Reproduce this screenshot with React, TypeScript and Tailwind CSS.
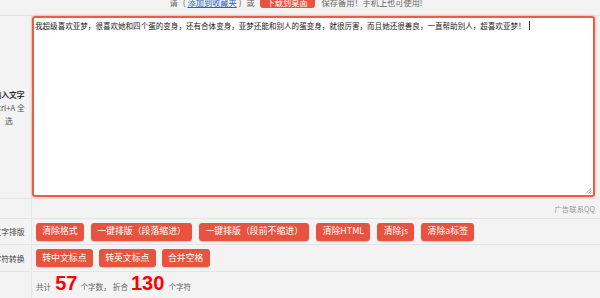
import React from "react";

const font = { fontFamily: '"Noto Sans CJK SC", "Liberation Sans", sans-serif' };

function Btn({ children }: { children: React.ReactNode }) {
  return (
    <span className="inline-flex h-[18px] items-center rounded-[3px] bg-[#e8533f] px-[6.25px] text-[8.9px] leading-none text-white shadow-[0_1px_1px_rgba(0,0,0,0.15)]">
      {children}
    </span>
  );
}

function Label({ children }: { children: React.ReactNode }) {
  return (
    <div className="w-[32px] shrink-0 self-stretch overflow-hidden border-r border-[#e4e4e4] flex items-center">
      <div className="ml-[-14px] w-[46px] shrink-0 text-center text-[7.8px] leading-[13px] text-[#444]">
        {children}
      </div>
    </div>
  );
}

export default function App() {
  const text =
    "我超级喜欢亚梦，很喜欢她和四个蛋的变身，还有合体变身，亚梦还能和别人的蛋变身，就很厉害，而且她还很善良，一直帮助别人，超喜欢亚梦！";
  return (
    <div className="h-[298px] w-[600px] overflow-hidden bg-[#f3f3f3]" style={font}>
      {/* top row */}
      <div className="h-[16px] overflow-hidden border-b border-[#e4e4e4]">
        <div className="mt-[-6px] flex h-[16px] items-center justify-center pr-[8px] text-[8.2px] leading-none text-[#666]">
          <span>请</span>
          <span className="ml-[5px]">(</span>
          <span className="mx-[2px] text-[#2a62c9] underline">添加到收藏夹</span>
          <span>)</span>
          <span className="ml-[5px]">或</span>
          <span className="ml-[5px] inline-flex h-[12px] items-center rounded-[3px] bg-[#e8533f] px-[7px] text-white">
            下载到桌面
          </span>
          <span className="ml-[7px]">保存备用！手机上也可使用!</span>
        </div>
      </div>

      {/* textarea row */}
      <div className="flex h-[183px] border-b border-[#e4e4e4]">
        <Label>
          <span className="font-bold text-[#333]">输入文字</span>
          <br />
          <span className="text-[#555]">Ctrl+A 全</span>
          <br />
          <span className="text-[#555]">选</span>
        </Label>
        <div className="flex-1">
          <div className="relative h-[181px] w-[563px] rounded-[3px] border-2 border-[#ef5c45] bg-white px-[1px] py-[2px] shadow-[0_0_3px_rgba(239,92,69,0.45)]">
            <div className="text-[7.55px] leading-[12px] text-[#222]">
              {text}
              <span className="ml-[3px] inline-block h-[9px] w-[1px] translate-y-[1px] bg-[#333]" />
            </div>
            <svg
              className="absolute bottom-[1px] right-[1px]"
              width="7"
              height="7"
              viewBox="0 0 7 7"
            >
              <path d="M6.5 1 L1 6.5 M6.5 3.5 L3.5 6.5 M6.5 5.5 L5.5 6.5" stroke="#999" strokeWidth="0.8" />
            </svg>
          </div>
        </div>
      </div>

      {/* ad row */}
      <div className="flex h-[20px] border-b border-[#e4e4e4]">
        <Label>{""}</Label>
        <div className="flex flex-1 items-center justify-end pr-[5px] text-[7.4px] leading-none text-[#999]">
          广告联系QQ
        </div>
      </div>

      {/* row: 文字排版 */}
      <div className="flex h-[26px] border-b border-[#e4e4e4]">
        <Label>文字排版</Label>
        <div className="flex flex-1 items-center gap-[7px] pl-[4px]">
          <Btn>清除格式</Btn>
          <Btn>一键排版（段落缩进）</Btn>
          <Btn>一键排版（段前不缩进）</Btn>
          <Btn>清除HTML</Btn>
          <Btn>清除js</Btn>
          <Btn>清除a标签</Btn>
        </div>
      </div>

      {/* row: 字符转换 */}
      <div className="flex h-[27px] border-b border-[#e4e4e4]">
        <Label>字符转换</Label>
        <div className="flex flex-1 items-center gap-[6px] pl-[4px]">
          <Btn>转中文标点</Btn>
          <Btn>转英文标点</Btn>
          <Btn>合并空格</Btn>
        </div>
      </div>

      {/* stats row */}
      <div className="flex h-[30px]">
        <Label>{""}</Label>
        <div className="flex flex-1 items-baseline pl-[4px] text-[7.6px] text-[#666]">
          <span>共计</span>
          <span
            className="ml-[4px] text-[20px] font-bold leading-[22px] text-[#ff0000]"
            style={{ fontFamily: '"Liberation Sans", Arial, sans-serif' }}
          >
            57
          </span>
          <span className="ml-[3px]">个字数，</span>
          <span className="ml-[2px]">折合</span>
          <span
            className="ml-[3px] text-[20px] font-bold leading-[22px] text-[#ff0000]"
            style={{ fontFamily: '"Liberation Sans", Arial, sans-serif' }}
          >
            130
          </span>
          <span className="ml-[4px]">个字符</span>
        </div>
      </div>
    </div>
  );
}
